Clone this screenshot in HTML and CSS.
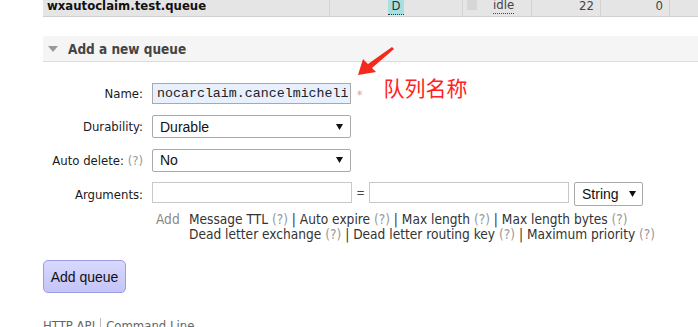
FILE: index.html
```html
<!DOCTYPE html>
<html lang="en">
    <head>
        <title>Queues</title>
        <link rel="stylesheet" href="styles.css">
    </head>
    <body>
        <div class="page">
            <div class="queue-row">
                <div class="cell cell-name">wxautoclaim.test.queue</div>
                <div class="cell cell-features"><abbr class="badge" title="durable: true">D</abbr></div>
                <div class="cell cell-state"><span class="state-box"></span><abbr class="dotted" title="Consumers are idle">idle</abbr></div>
                <div class="cell cell-num">22</div>
                <div class="cell cell-num">0</div>
                <div class="cell cell-rest"></div>
            </div>

            <div class="panel">
                <h2 class="panel-title"><span class="toggle"></span>Add a new queue</h2>
                <form class="queue-form">
                    <label class="form-label">Name:</label>
                    <div class="field">
                        <input class="name-input" type="text" value="nocarclaim.cancelmichelin">
                        <span class="required">*</span>
                        <span class="note">队列名称</span>
                    </div>

                    <label class="form-label">Durability:</label>
                    <div class="field">
                        <select class="select wide">
                            <option>Durable</option>
                            <option>Transient</option>
                        </select>
                    </div>

                    <label class="form-label">Auto delete: <span class="help">(?)</span></label>
                    <div class="field">
                        <select class="select wide">
                            <option>No</option>
                            <option>Yes</option>
                        </select>
                    </div>

                    <label class="form-label">Arguments:</label>
                    <div class="field args">
                        <input class="text-input" type="text">
                        <span class="equals">=</span>
                        <input class="text-input" type="text">
                        <select class="select short">
                            <option>String</option>
                            <option>Number</option>
                            <option>Boolean</option>
                        </select>
                    </div>

                    <div class="hints">
                        <span class="add">Add</span>
                        <div class="hint-lines">
                            <div>Message TTL <span class="help">(?)</span> | Auto expire <span class="help">(?)</span> | Max length <span class="help">(?)</span> | Max length bytes <span class="help">(?)</span></div>
                            <div>Dead letter exchange <span class="help">(?)</span> | Dead letter routing key <span class="help">(?)</span> | Maximum priority <span class="help">(?)</span></div>
                        </div>
                    </div>
                </form>
                <button class="add-button" type="button">Add queue</button>
            </div>

            <div class="footer">
                <a href="#">HTTP API</a>
                <a href="#" class="footer-sep">Command Line</a>
            </div>
        </div>

        <svg class="pointer" width="698" height="327" viewBox="0 0 698 327">
            <polygon points="392,47 368,64 363,59 358,75 376,72 372,68 394,49" fill="#f42a1c"/>
        </svg>
    </body>
</html>
```

FILE: styles.css
```css
body {
    margin: 0;
    padding: 0;
    background: white;
    font-family: "DejaVu Sans Condensed", "DejaVu Sans", sans-serif;
    font-size: 13px;
    color: #222;
    overflow: hidden;
}

.page {
    padding-left: 43px;
}

/* queue table, scrolled so the row is cut at the top */
.queue-row {
    display: flex;
    margin-top: -4px;
    height: 20px;
    background: #e5e5e5;
    border-bottom: 1px solid #cfcfcf;
}

.cell {
    line-height: 19px;
    border-right: 1px solid #d2d2d2;
    box-sizing: border-box;
}

.cell-name {
    width: 287px;
    padding-left: 4px;
    font-weight: bold;
    color: #111;
}

.cell-features {
    width: 133px;
    text-align: center;
}

.badge {
    display: inline-block;
    background: #a9dfe0;
    padding: 0 3px;
    line-height: 17px;
    text-decoration: none;
    border-bottom: 1px dotted #333;
    color: #333;
}

.cell-state {
    width: 69px;
    display: flex;
    align-items: flex-start;
    padding-left: 4px;
    color: #444;
}

.state-box {
    width: 10px;
    height: 14px;
    background: #d6d6d6;
    margin-right: 16px;
}

.dotted {
    text-decoration: none;
    border-bottom: 1px dotted #444;
    line-height: 16px;
    margin-top: 1px;
}

.cell-num {
    width: 69px;
    text-align: right;
    padding-right: 6px;
    color: #444;
}

.cell-rest {
    flex: 1;
    border-right: none;
}

/* add queue panel */
.panel {
    margin-top: 19px;
}

.panel-title {
    margin: 0;
    height: 25px;
    display: flex;
    align-items: center;
    background: #f5f5f5;
    border-bottom: 1px solid #dcdcdc;
    font-size: 13.5px;
    font-weight: bold;
    color: #444;
}

.toggle {
    width: 0;
    height: 0;
    border-left: 5px solid transparent;
    border-right: 5px solid transparent;
    border-top: 6px solid #9a9a9a;
    margin: 1px 10px 0 5px;
}

.queue-form {
    display: grid;
    grid-template-columns: 100px 1fr;
    grid-template-rows: 33px 33px 34px 34px auto;
    column-gap: 9px;
    align-items: center;
    padding-top: 15px;
}

.form-label {
    text-align: right;
    color: #1a1a1a;
    white-space: nowrap;
}

.help {
    color: #999;
}

.field {
    display: flex;
    align-items: center;
}

.name-input {
    width: 199px;
    height: 21px;
    box-sizing: border-box;
    border: 1px solid #a9a9a9;
    background: #e8f0fe;
    font-family: "Liberation Mono", monospace;
    font-size: 13.3px;
    padding: 0 2px 0 4px;
    color: #222;
}

.required {
    color: #f49a8e;
    margin-left: 6px;
    font-size: 12px;
    margin-top: 2px;
}

.note {
    font-family: "Noto Sans CJK SC", sans-serif;
    font-size: 21px;
    color: #ff2323;
    margin-left: 21px;
    margin-bottom: 13px;
    line-height: 22px;
}

.select {
    -webkit-appearance: none;
    appearance: none;
    height: 23px;
    box-sizing: border-box;
    border: 1px solid #a9a9a9;
    border-radius: 2px;
    background: white url("data:image/svg+xml,%3Csvg xmlns='http://www.w3.org/2000/svg' width='7' height='6'%3E%3Cpath d='M0 0h7L3.5 6z' fill='%23111'/%3E%3C/svg%3E") no-repeat right 7px center;
    font-family: "Liberation Sans", Arial, sans-serif;
    font-size: 14px;
    color: #111;
    padding: 0 0 0 7px;
}

.select.wide {
    width: 199px;
}

.select.short {
    width: 69px;
    height: 24px;
    margin-left: 5px;
    padding-left: 7px;
    background-position: right 6px center;
}

.args {
    align-items: flex-start;
}

.text-input {
    width: 200px;
    height: 21px;
    box-sizing: border-box;
    border: 1px solid #c8c8c8;
    padding: 0 4px;
}

.equals {
    width: 17px;
    text-align: center;
    font-family: "Liberation Sans", sans-serif;
    line-height: 21px;
    color: #444;
}

.hints {
    grid-column: 2;
    display: flex;
    margin-top: 1px;
    font-size: 13.6px;
    line-height: 15px;
    color: #333;
}

.add {
    color: #888;
    margin-left: 4px;
    width: 33px;
}

.add-button {
    display: block;
    margin-top: 18px;
    width: 83px;
    height: 33px;
    border: 1px solid #9c9ce0;
    border-radius: 5px;
    background: linear-gradient(#d8d8ff, #c4c4f8);
    font-family: "Liberation Sans", Arial, sans-serif;
    font-size: 14px;
    color: #111;
    padding: 0;
}

.footer {
    margin-top: 25px;
    display: flex;
    font-size: 13px;
    line-height: 16px;
}

.footer a {
    color: #666;
    text-decoration: none;
}

.footer-sep {
    border-left: 1px solid #bbb;
    margin-left: 5px;
    padding-left: 5px;
}

.pointer {
    position: absolute;
    top: 0;
    left: 0;
    pointer-events: none;
}
```
